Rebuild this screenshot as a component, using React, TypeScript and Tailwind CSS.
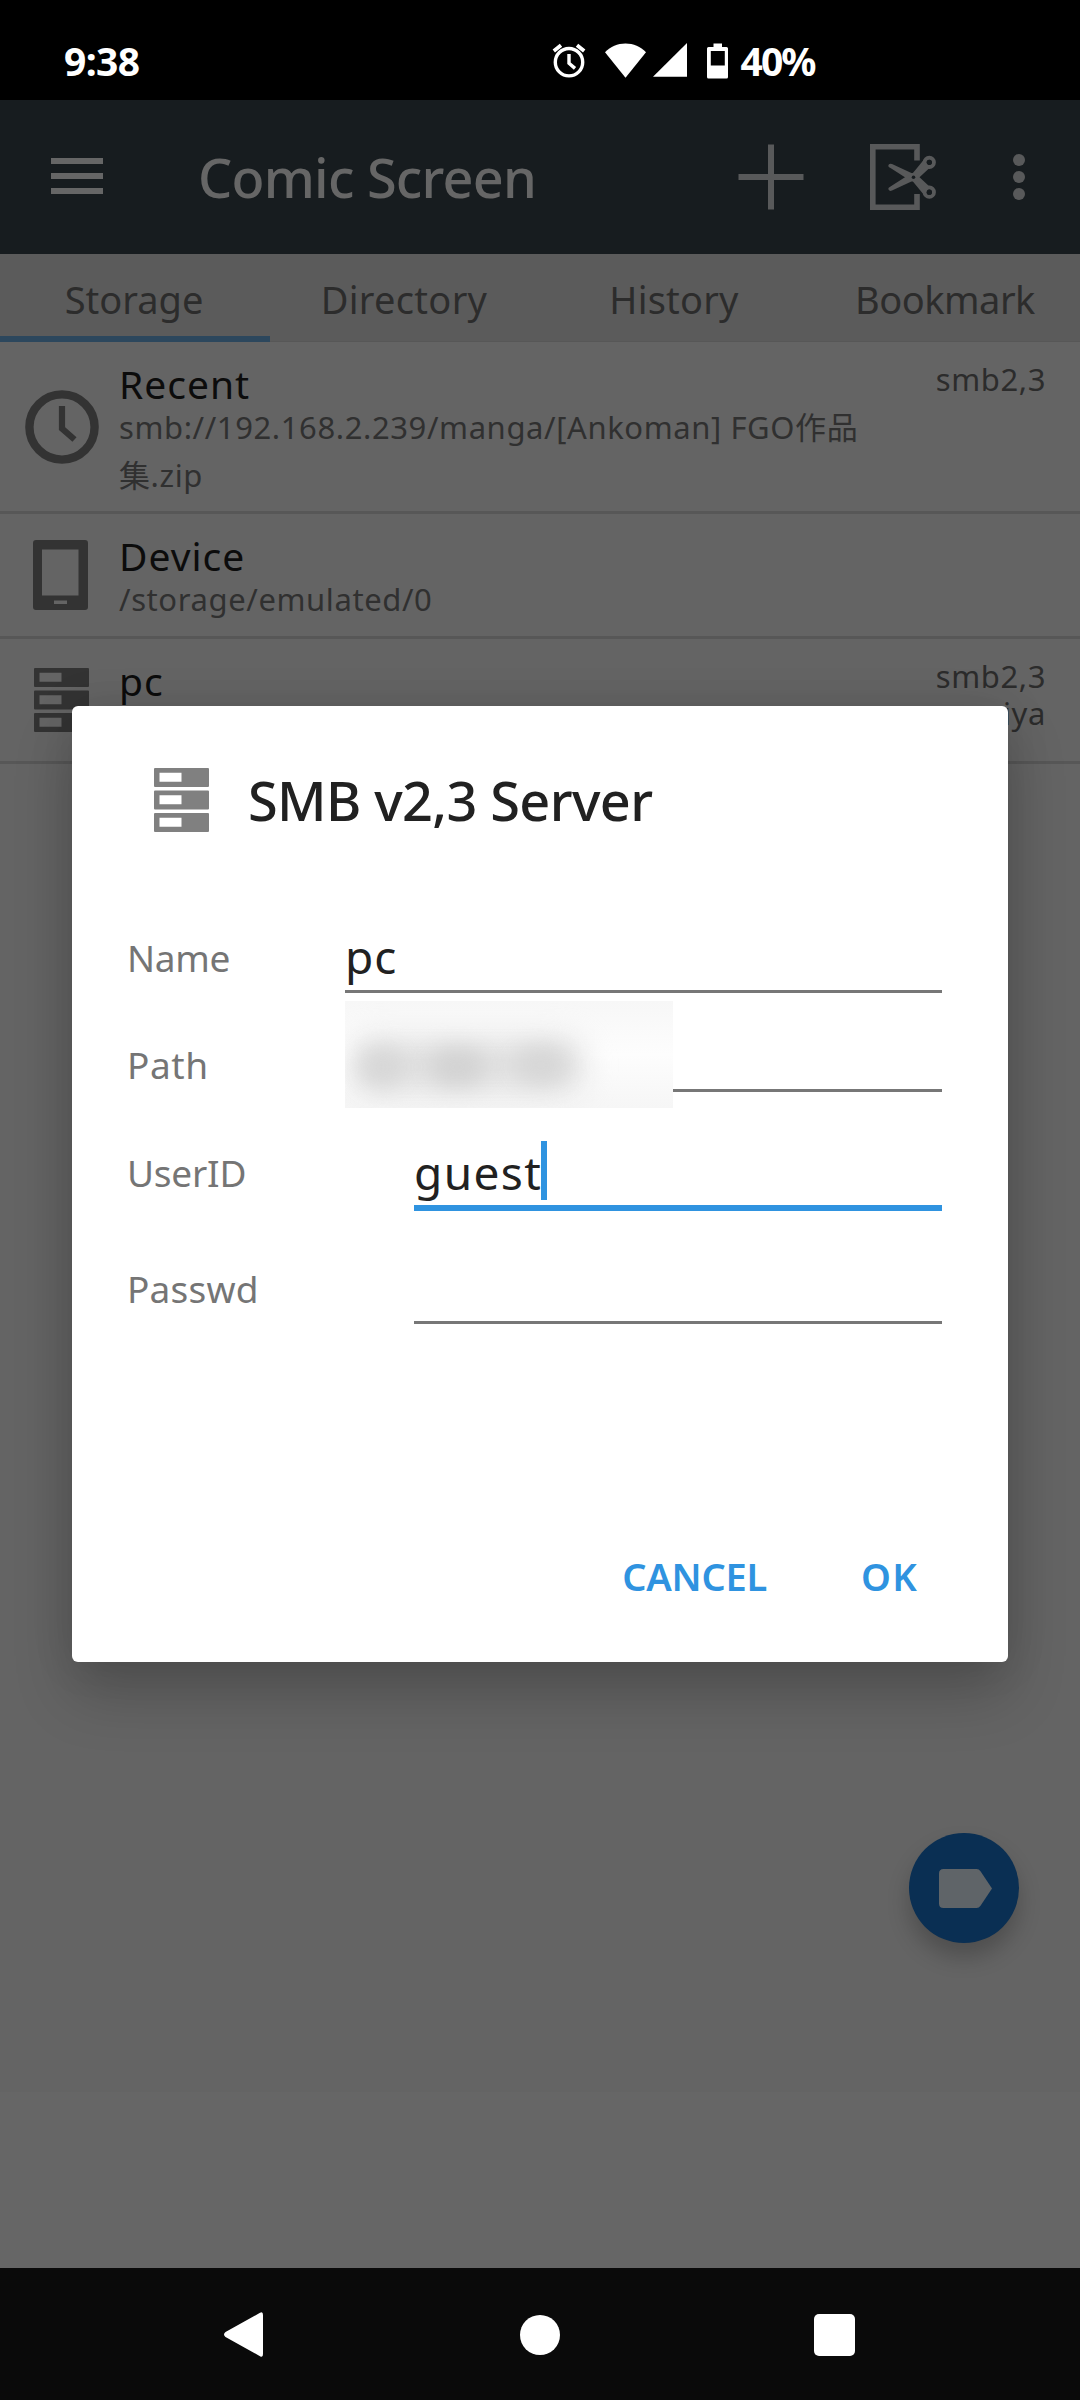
import React from 'react';

function AlarmIcon() {
  return (
    <svg className="h-9 w-[34px]" viewBox="0 0 34 36" fill="none" stroke="#fff">
      <circle cx="17" cy="19.2" r="13.7" strokeWidth="3.4" />
      <path d="M17 11v9.2l6 5.2" strokeWidth="3.4" />
      <path d="M1.8 8 9 2.2M25 2.2 32.2 8" strokeWidth="3.8" />
    </svg>
  );
}

function WifiIcon() {
  return (
    <svg className="ml-[19px] h-9 w-[41px]" viewBox="0 0 41 36" fill="#fff">
      <path d="M20.5 34.8 0 9.3C5.5 4 12.5.6 20.5.6S35.500 4 41 9.300z" />
    </svg>
  );
}

function SignalIcon() {
  return (
    <svg className="ml-[7px] h-9 w-[34px]" viewBox="0 0 34 36" fill="#fff">
      <path d="M34 0v33.700H0z" />
    </svg>
  );
}

function BatteryIcon() {
  return (
    <svg className="ml-5 h-9 w-[21px]" viewBox="0 0 21 36" fill="#fff">
      <path fillRule="evenodd" d="M6.500.600h8.500V4h4.500Q21 4 21 5.500V34q0 1.600-1.500 1.600h-18Q0 35.600 0 34V5.500Q0 4 1.500 4h5zM3.800 8v14.500h14V8z" />
    </svg>
  );
}

function MenuIcon() {
  return (
    <div className="mb-[2px] flex w-[52px] flex-col gap-[9px]">
      <div className="h-[6px] bg-[#666]" />
      <div className="h-[6px] bg-[#666]" />
      <div className="h-[6px] bg-[#666]" />
    </div>
  );
}

function PlusIcon() {
  return (
    <svg className="ml-auto h-[66px] w-[66px]" viewBox="0 0 66 66" fill="#58595a">
      <path d="M30 .500h6V30h29.500v6H36v29.500h-6V36H.500v-6H30z" />
    </svg>
  );
}

function ScissorsIcon() {
  return (
    <svg className="ml-[66px] h-[66px] w-[67px]" viewBox="0 0 67 66" fill="none" stroke="#58595a">
      <path d="M47 16.500V2.800H2.800v60.400H47V50" strokeWidth="5.600" />
      <circle cx="59.300" cy="18.300" r="4.600" strokeWidth="4" />
      <circle cx="59.300" cy="48.200" r="4.600" strokeWidth="4" />
      <g fill="#58595a" stroke="none">
        <path d="M18.300 21.500Q18.800 19 22 20L42.500 29.500 54 15.500 60 23.500 46 36.500Q43 38.500 40 36.500L20.500 24Q18 23 18.300 21.500z" />
        <path d="M18.300 45.100Q18.800 47.600 22 46.600L42.500 37.100 54 51 60 43 46 30.100Q43 28.100 40 30.100L20.500 42.600Q18 43.600 18.300 45.100z" />
      </g>
      <circle cx="59.300" cy="18.300" r="2.600" fill="#171c1f" stroke="none" />
      <circle cx="59.300" cy="48.200" r="2.600" fill="#171c1f" stroke="none" />
      <circle cx="43.500" cy="33.300" r="1.800" fill="#171c1f" stroke="none" />
    </svg>
  );
}

function MoreIcon() {
  return (
    <div className="ml-[76px] flex flex-col gap-[5px]">
      <div className="size-3 rounded-full bg-[#58595a]" />
      <div className="size-3 rounded-full bg-[#58595a]" />
      <div className="size-3 rounded-full bg-[#58595a]" />
    </div>
  );
}

function ClockIcon() {
  return (
    <svg className="size-[74px]" viewBox="0 0 74 74" fill="none" stroke="#333">
      <circle cx="37" cy="37" r="32.600" strokeWidth="8.400" />
      <path d="M37 16v22.500l12.500 11" strokeWidth="6.200" />
    </svg>
  );
}

function DeviceIcon() {
  return (
    <svg className="mr-[2px] h-[70px] w-[55px]" viewBox="0 0 55 70" fill="#333">
      <path fillRule="evenodd" d="M3 0h49q3 0 3 3v64q0 3-3 3H3q-3 0-3-3V3Q0 0 3 0zM9 9.500v46h36.500v-46zM21 60.500v3.500h13v-3.500z" />
    </svg>
  );
}

function ServerIcon({ color }: { color: string }) {
  return (
    <svg className="mr-px h-16 w-[55px]" viewBox="0 0 55 64" fill={color}>
      {[0, 22.5, 45].map((y) => (
        <path
          key={y}
          transform={`translate(0 ${y})`}
          fillRule="evenodd"
          d="M1 0h53q1 0 1 1v17q0 1-1 1H1q-1 0-1-1V1Q0 0 1 0zM5.500 4.800v9h22v-9z"
        />
      ))}
    </svg>
  );
}

function StatusBar() {
  return (
    <div className="flex h-[100px] items-start bg-black pt-[43px] text-[39px] leading-9 font-bold text-white">
      <span className="ml-16 tracking-[-0.6px]">9:38</span>
      <div className="ml-[413px] flex">
        <AlarmIcon />
        <WifiIcon />
        <SignalIcon />
        <BatteryIcon />
      </div>
      <span className="ml-3 tracking-[-1.9px]">40%</span>
    </div>
  );
}

function Toolbar() {
  return (
    <div className="flex h-[154px] items-center bg-[#171c1f] pr-[55px] pl-[51px]">
      <MenuIcon />
      <span className="ml-[95px] text-[54px] font-medium tracking-[-0.77px] text-[#666]">Comic Screen</span>
      <PlusIcon />
      <ScissorsIcon />
      <MoreIcon />
    </div>
  );
}

function Tabs() {
  return (
    <div className="grid h-[88px] grid-cols-4 bg-[#5b5b5b] text-center text-[38px] leading-[90px] text-[#2c2c2c] shadow-[inset_0_-1px_0_#575757]">
      <span className="h-[88px] pr-[2px] shadow-[inset_0_-6px_0_#2c475d]">Storage</span>
      <span className="h-[88px] pr-[2px] tracking-[0.3px]">Directory</span>
      <span className="h-[88px] pr-[2px] tracking-[0.2px]">History</span>
      <span className="h-[88px] tracking-[-0.5px]">Bookmark</span>
    </div>
  );
}

type RowProps = {
  icon: React.ReactNode;
  title: string;
  path: string;
  tags?: string[];
  className: string;
};

function StorageRow({ icon, title, path, tags = [], className }: RowProps) {
  return (
    <div className={`flex border-b-[3px] border-[#575757] pr-[34px] ${className}`}>
      <div className="flex w-[119px] items-center pl-[5px]">
        <div className="flex w-[113px] justify-center">{icon}</div>
      </div>
      <div className="w-[745px] pt-[22px]">
        <div className="text-[39px] leading-10 tracking-[1px] text-[#0c0c0c]">{title}</div>
        <div className="-mt-px text-[31px] leading-[48px] tracking-[0.6px] text-[#303030]">{path}</div>
      </div>
      <div className="ml-auto pt-[19px] text-right text-[31px] leading-[37px] tracking-[0.6px] text-[#2c2c2c]">
        {tags.map((tag) => (
          <div key={tag}>{tag}</div>
        ))}
      </div>
    </div>
  );
}

function Label({ text, className }: { text: string; className: string }) {
  return <div className={`shrink-0 text-[37px] leading-[44px] text-[#757575] ${className}`}>{text}</div>;
}

function ServerDialog() {
  return (
    <div className="absolute top-[706px] left-[72px] h-[956px] w-[936px] rounded-[6px] bg-white shadow-[0_32px_60px_rgba(0,0,0,0.2),0_0_44px_rgba(0,0,0,0.1)]">
      <div className="mt-[64px] flex h-[60px] items-center pl-[82px]">
        <ServerIcon color="#808080" />
        <span className="ml-[38px] text-[54px] font-medium tracking-[-0.6px] text-[#212121]">SMB v2,3 Server</span>
      </div>

      <div className="mt-[91px] flex h-[72px] pr-[66px] pl-[55px]">
        <Label text="Name" className="w-[218px] pt-[15px] tracking-[-0.3px]" />
        <div className="flex flex-1 items-center border-b-[3px] border-[#777] pt-[2px] text-[46px] tracking-[1px] text-[#212121]">pc</div>
      </div>

      <div className="mt-[27px] flex h-[72px] pr-[66px] pl-[55px]">
        <Label text="Path" className="w-[218px] pt-[23px] tracking-[0.6px]" />
        <div className="relative flex-1 border-b-[3px] border-[#777]">
          <div className="absolute -top-[19px] left-0 h-[107px] w-[328px] overflow-hidden bg-linear-to-b from-[#f7f7f7] via-[#fdfdfd] to-[#f6f6f6]">
            <div className="absolute top-[38px] left-[6px] h-[52px] w-[232px] rounded-[20px] bg-[#e0e0e0] blur-[15px]" />
            <div className="absolute top-[48px] left-[16px] h-9 w-11 rounded-full bg-[#d6d6d6] blur-[11px]" />
            <div className="absolute top-[48px] left-[84px] h-9 w-14 rounded-full bg-[#d2d2d2] blur-[11px]" />
            <div className="absolute top-[46px] left-[170px] h-9 w-13 rounded-full bg-[#d6d6d6] blur-[11px]" />
          </div>
        </div>
      </div>

      <div className="mt-[45px] flex h-[74px] pr-[66px] pl-[55px]">
        <Label text="UserID" className="w-[287px] pt-[14px] tracking-[-0.2px]" />
        <div className="flex flex-1 items-center border-b-[6px] border-[#2f93e0] text-[46px] tracking-[1.4px] text-[#212121]">
          <span className="pt-[2px]">guest</span>
          <div className="mb-px -ml-[1px] h-[59px] w-[6px] bg-[#2f93e0]" />
        </div>
      </div>

      <div className="mt-[41px] flex h-[72px] pr-[66px] pl-[55px]">
        <Label text="Passwd" className="w-[287px] pt-[15px] tracking-[0.2px]" />
        <div className="flex-1 border-b-[3px] border-[#777]" />
      </div>

      <div className="mt-[222px] flex h-[60px] items-center justify-end pr-[90px] text-[38px] font-semibold text-[#2f93e0]">
        <span className="tracking-[-0.2px]">CANCEL</span>
        <span className="ml-[94px] tracking-[1.2px]">OK</span>
      </div>
    </div>
  );
}

function NavBar() {
  return (
    <div className="flex h-[132px] items-center bg-[#0a0a0a] pt-px">
      <svg className="ml-[223px] h-[45px] w-10" viewBox="0 0 40 45" fill="#fff">
        <path d="M37 .800Q40-1 40 3v39q0 4-3 2.200L2.500 25Q-.500 22.500 2.500 20z" />
      </svg>
      <div className="ml-[257px] size-10 rounded-full bg-white" />
      <div className="ml-[254px] h-[42px] w-[41px] rounded-[5px] bg-white" />
    </div>
  );
}

export default function App() {
  return (
    <div
      lang="ja"
      className="relative flex h-[2400px] w-[1080px] flex-col overflow-hidden bg-[#646464] font-['Noto_Sans','Noto_Sans_CJK_JP',sans-serif]"
    >
      <StatusBar />
      <Toolbar />
      <Tabs />
      <div className="flex h-[1750px] flex-col bg-[#646464]">
        <StorageRow
          className="h-[172px]"
          icon={<ClockIcon />}
          title="Recent"
          path="smb://192.168.2.239/manga/[Ankoman] FGO作品集.zip"
          tags={['smb2,3']}
        />
        <StorageRow className="h-[125px]" icon={<DeviceIcon />} title="Device" path="/storage/emulated/0" />
        <StorageRow className="h-[125px]" icon={<ServerIcon color="#333" />} title="pc" path="" tags={['smb2,3', 'iya']} />
      </div>
      <div className="flex-1 bg-[#666]" />
      <NavBar />

      <div className="absolute top-[1833px] left-[909px] flex size-[110px] items-center justify-center rounded-full bg-[#0a2f53] shadow-[0_14px_22px_rgba(0,0,0,0.22)]">
        <svg className="ml-[3px] h-[39px] w-[53px]" viewBox="0 0 53 39" fill="#5f6468">
          <path d="M4.500 0h33q2.500 0 4 2.200L53 19.500 41.500 36.800Q40 39 37.500 39h-33Q0 39 0 34.500v-30Q0 0 4.500 0z" />
        </svg>
      </div>

      <ServerDialog />
    </div>
  );
}
